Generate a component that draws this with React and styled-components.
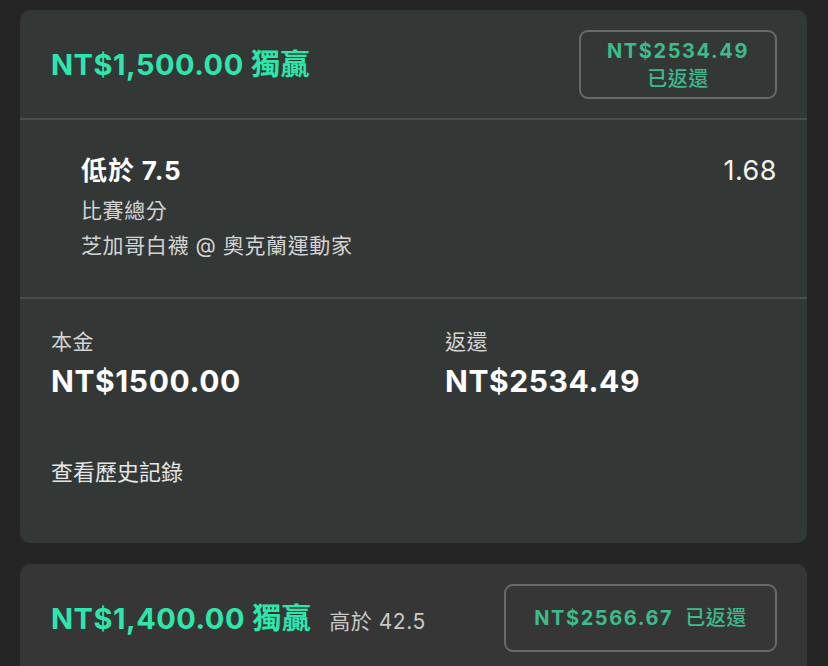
import React from "react";
import styled, { createGlobalStyle } from "styled-components";

const GlobalStyle = createGlobalStyle`
  body {
    margin: 0;
    background: #252525;
    font-family: Inter, "Noto Sans CJK TC", sans-serif;
  }
`;

const bets = [
  {
    stake: "NT$1,500.00",
    type: "獨贏",
    returned: "NT$2534.49",
    pick: "低於 7.5",
    odds: "1.68",
    market: "比賽總分",
    match: "芝加哥白襪 @ 奧克蘭運動家",
    principal: "NT$1500.00",
    expanded: true,
  },
  {
    stake: "NT$1,400.00",
    type: "獨贏",
    returned: "NT$2566.67",
    pick: "高於 42.5",
    expanded: false,
  },
];

function BetCard({ bet }) {
  return (
    <Card $expanded={bet.expanded}>
      <Header $expanded={bet.expanded}>
        <TitleRow>
          <Title>
            {bet.stake} {bet.type}
          </Title>
          {!bet.expanded && <SubPick>{bet.pick}</SubPick>}
        </TitleRow>
        <Badge $expanded={bet.expanded}>
          <BadgeAmount>{bet.returned}</BadgeAmount>
          <BadgeLabel>已返還</BadgeLabel>
        </Badge>
      </Header>
      {bet.expanded && (
        <>
          <Selection>
            <SelTop>
              <Pick>{bet.pick}</Pick>
              <Odds>{bet.odds}</Odds>
            </SelTop>
            <Meta>{bet.market}</Meta>
            <Meta>{bet.match}</Meta>
          </Selection>
          <Summary>
            <Totals>
              <div>
                <Label>本金</Label>
                <Amount>{bet.principal}</Amount>
              </div>
              <div>
                <Label>返還</Label>
                <Amount>{bet.returned}</Amount>
              </div>
            </Totals>
            <HistoryLink>查看歷史記錄</HistoryLink>
          </Summary>
        </>
      )}
    </Card>
  );
}

export default function App() {
  return (
    <Page>
      <GlobalStyle />
      {bets.map((bet, i) => (
        <BetCard key={i} bet={bet} />
      ))}
    </Page>
  );
}

const Page = styled.div`
  display: flex;
  flex-direction: column;
  gap: 21px;
  padding: 10px 21px 0 20px;
  height: 666px;
  box-sizing: border-box;
  overflow: hidden;
`;

const Card = styled.div`
  background: ${(p) => (p.$expanded ? "#333836" : "#363636")};
  border-radius: 10px;
  flex-shrink: 0;
  height: ${(p) => (p.$expanded ? "533px" : "auto")};
  padding-bottom: ${(p) => (p.$expanded ? "0" : "40px")};
`;

const Header = styled.div`
  display: flex;
  align-items: center;
  justify-content: space-between;
  padding: ${(p) => (p.$expanded ? "20px 30px 19px 31px" : "20px 30px 0 31px")};
  border-bottom: ${(p) => (p.$expanded ? "2px solid #4a4f4d" : "none")};
`;

const TitleRow = styled.div`
  display: flex;
  align-items: baseline;
  gap: 18px;
  padding-bottom: 5px;
`;

const Title = styled.div`
  color: #2ee6ac;
  font-size: 29px;
  font-weight: 700;
  letter-spacing: 0.5px;
`;

const SubPick = styled.div`
  color: #c9c9c9;
  font-size: 21px;
  letter-spacing: 0.5px;
`;

const Badge = styled.div`
  display: flex;
  flex-direction: ${(p) => (p.$expanded ? "column" : "row")};
  align-items: center;
  justify-content: center;
  gap: ${(p) => (p.$expanded ? "0" : "12px")};
  box-sizing: border-box;
  width: ${(p) => (p.$expanded ? "198px" : "273px")};
  height: ${(p) => (p.$expanded ? "69px" : "68px")};
  border: 2px solid #676a69;
  border-radius: 9px;
  color: #3dbb8a;
  font-size: 20px;
  line-height: 28px;
`;

const BadgeAmount = styled.span`
  font-weight: 700;
  letter-spacing: 1.6px;
`;

const BadgeLabel = styled.span`
  font-weight: 500;
  letter-spacing: 0.5px;
`;

const Selection = styled.div`
  padding: 35px 30px 34px 61px;
  border-bottom: 2px solid #4a4f4d;
`;

const SelTop = styled.div`
  display: flex;
  justify-content: space-between;
  align-items: center;
  line-height: 32px;
  margin-bottom: 6px;
`;

const Pick = styled.div`
  color: #ffffff;
  font-size: 26px;
  font-weight: 700;
  letter-spacing: 0.9px;
`;

const Odds = styled.div`
  color: #f2f2f2;
  font-size: 27px;
  letter-spacing: 0.5px;
`;

const Meta = styled.div`
  color: #d4d4d4;
  font-size: 21px;
  line-height: 35px;
  letter-spacing: 0.6px;
`;

const Summary = styled.div`
  padding: 30px 31px 0 31px;
`;

const Totals = styled.div`
  display: grid;
  grid-template-columns: 394px 1fr;
`;

const Label = styled.div`
  color: #d4d4d4;
  font-size: 21px;
  line-height: 26px;
  letter-spacing: 0.5px;
`;

const Amount = styled.div`
  color: #ffffff;
  font-size: 30px;
  font-weight: 700;
  line-height: 36px;
  letter-spacing: 0.6px;
  margin-top: 8px;
`;

const HistoryLink = styled.div`
  color: #e6e6e6;
  font-size: 22px;
  line-height: 30px;
  margin-top: 58px;
`;
